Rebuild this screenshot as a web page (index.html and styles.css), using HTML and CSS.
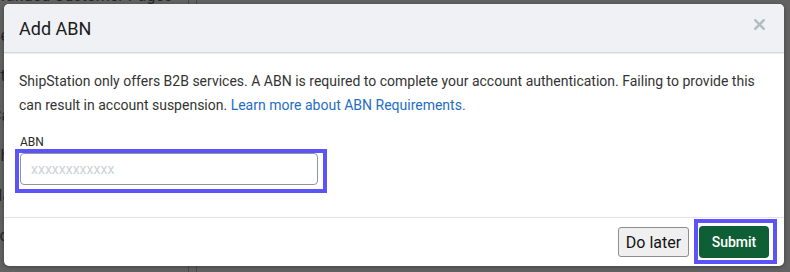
FILE: index.html
```html
<!DOCTYPE html>
<html lang="en">
<head>
<meta charset="utf-8">
<title>Add ABN</title>
<link rel="stylesheet" href="styles.css">
</head>
<body>
<div class="page">
  <ul class="sidebar">
    <li>Branded Customer Pages</li>
    <li>Selling Channels</li>
    <li>Store Setup</li>
    <li>Carriers</li>
    <li>Shipping Rules</li>
    <li>Hardware</li>
    <li>Locations</li>
  </ul>
  <div class="divider"></div>
  <div class="main"></div>
</div>
<div class="modal">
  <div class="modal-header">
    <h2 class="modal-title">Add ABN</h2>
    <button class="close" aria-label="Close">
      <svg width="11" height="11" viewBox="0 0 11 11"><path d="M1.2 1.2 L9.8 9.8 M9.8 1.2 L1.2 9.8" stroke="#b3bbc3" stroke-width="2.4" stroke-linecap="round"/></svg>
    </button>
  </div>
  <div class="modal-body">
    <p class="intro">ShipStation only offers B2B services. A ABN is required to complete your account authentication. Failing to provide this can result in account suspension. <a href="#" class="link">Learn more about ABN Requirements.</a></p>
    <label class="field-label" for="abn">ABN</label>
    <div class="highlight field-wrap">
      <input id="abn" class="field" type="text" placeholder="xxxxxxxxxxxx">
    </div>
  </div>
  <div class="modal-footer">
    <button class="btn btn-later">Do later</button>
    <div class="highlight submit-wrap">
      <button class="btn btn-submit">Submit</button>
    </div>
  </div>
</div>
</body>
</html>
```

FILE: styles.css
```css
* { box-sizing: border-box; }
html, body { margin: 0; padding: 0; }
body {
  width: 790px;
  height: 272px;
  overflow: hidden;
  background: #626262;
  font-family: Roboto, "Liberation Sans", Arial, sans-serif;
  position: relative;
}
.page {
  display: flex;
  height: 272px;
}
.sidebar {
  list-style: none;
  margin: -12px 0 0 0;
  padding: 0;
  width: 188px;
  color: #262626;
  font-size: 16px;
  overflow: hidden;
}
.sidebar li {
  height: 40px;
  line-height: 16px;
  margin-left: -9px;
  white-space: nowrap;
}
.divider {
  width: 9px;
  border-left: 1px solid #4a4a4a;
  border-right: 1px solid #4a4a4a;
}
.main { flex: 1; }

.modal {
  position: absolute;
  left: 4px;
  top: 4px;
  width: 780px;
  background: #fff;
  border-radius: 5px;
  overflow: hidden;
  box-shadow: 0 1px 4px rgba(0,0,0,0.35);
  color: #333;
}
.modal-header {
  height: 49px;
  background: #f0f1f5;
  border-bottom: 1px solid #d3d6db;
  box-shadow: 0 1px 1px rgba(0,0,0,0.06);
  display: flex;
  align-items: flex-start;
  justify-content: space-between;
  padding: 2px 19px 0 15px;
}
.modal-title {
  margin: 0;
  font-size: 18px;
  font-weight: 400;
  line-height: 46px;
  color: #1b1b1b;
}
.close {
  border: 0;
  background: none;
  padding: 0;
  margin-top: 13px;
  width: 11px;
  height: 11px;
  display: flex;
}
.modal-body {
  padding: 16px 15px 24px 15px;
}
.intro {
  margin: 0 0 18px 0;
  font-size: 14px;
  line-height: 24px;
  color: #333;
}
.link { color: #1d6ec5; text-decoration: none; }
.field-label {
  display: block;
  font-size: 12px;
  line-height: 14px;
  margin-left: 1px;
  color: #2a2a2a;
}
.highlight {
  border: 4px solid #5c54f8;
}
.field-wrap {
  width: 312px;
  margin-left: -4px;
  padding: 0 5px 4px 1px;
}
.field {
  display: block;
  width: 298px;
  height: 32px;
  border: 1px solid #8d96a2;
  border-radius: 4px;
  padding: 0 10px;
  font-family: Roboto, "Liberation Sans", Arial, sans-serif;
  font-size: 14px;
  color: #333;
  outline: none;
}
.field::placeholder { color: #cdd1d6; }
.modal-footer {
  border-top: 1px solid #e1e4ea;
  height: 49px;
  display: flex;
  justify-content: flex-end;
  align-items: flex-start;
  padding: 1px 7px 0 0;
  gap: 5px;
}
.btn {
  font-family: Roboto, "Liberation Sans", Arial, sans-serif;
  cursor: pointer;
}
.btn-later {
  margin-top: 8px;
  width: 71px;
  height: 30px;
  background: #efefef;
  border: 1px solid #8e8e8e;
  border-radius: 3px;
  font-size: 16px;
  color: #141414;
  padding: 0;
}
.submit-wrap {
  padding: 3px 4px 2px 1px;
}
.btn-submit {
  display: block;
  width: 70px;
  height: 32px;
  background: #0e5f36;
  border: 0;
  border-radius: 4px;
  color: #fff;
  font-size: 14px;
  font-weight: 500;
  padding: 0;
}
```
